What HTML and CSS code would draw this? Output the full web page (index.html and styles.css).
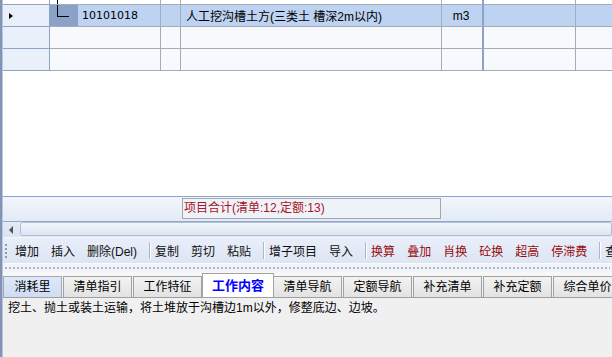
FILE: index.html
```html
<!DOCTYPE html>
<html lang="zh-CN">
<head>
<meta charset="utf-8">
<title>定额</title>
<link rel="stylesheet" href="styles.css">
</head>
<body>
<div class="app">
  <div class="grid">
    <div class="row top">
      <div class="c hdr"></div>
      <div class="c code"><span class="vline"></span></div>
      <div class="c sm"></div>
      <div class="c name"></div>
      <div class="c unit"></div>
      <div class="c x1"></div>
      <div class="c last"></div>
    </div>
    <div class="row sel">
      <div class="c hdr"><span class="arrow"></span></div>
      <div class="c code"><span class="tree"><span class="elbow"></span></span><span class="codetext">10101018</span></div>
      <div class="c sm"></div>
      <div class="c name">人工挖沟槽土方(三类土 槽深2m以内)</div>
      <div class="c unit">m3</div>
      <div class="c x1"></div>
      <div class="c last"></div>
    </div>
    <div class="row">
      <div class="c hdr"></div>
      <div class="c code"></div>
      <div class="c sm"></div>
      <div class="c name"></div>
      <div class="c unit"></div>
      <div class="c x1"></div>
      <div class="c last"></div>
    </div>
    <div class="row">
      <div class="c hdr"></div>
      <div class="c code"></div>
      <div class="c sm"></div>
      <div class="c name"></div>
      <div class="c unit"></div>
      <div class="c x1"></div>
      <div class="c last"></div>
    </div>
  </div>
  <div class="status"><div class="sum">项目合计(清单:12,定额:13)</div></div>
  <div class="hscroll"><span class="larrow"></span><div class="track"></div></div>
  <div class="toolbar">
    <span class="grip"></span>
    <span class="btn">增加</span>
    <span class="btn">插入</span>
    <span class="btn">删除(Del)</span>
    <span class="sep"></span>
    <span class="btn">复制</span>
    <span class="btn">剪切</span>
    <span class="btn">粘贴</span>
    <span class="sep"></span>
    <span class="btn">增子项目</span>
    <span class="btn">导入</span>
    <span class="sep"></span>
    <span class="btn red">换算</span>
    <span class="btn red">叠加</span>
    <span class="btn red">肖换</span>
    <span class="btn red">砼换</span>
    <span class="btn red">超高</span>
    <span class="btn red">停滞费</span>
    <span class="sep"></span>
    <span class="btn">查</span>
  </div>
  <div class="splitter"><span class="dots"></span></div>
  <div class="tabs">
    <span class="tab first">消耗里</span>
    <span class="tab">清单指引</span>
    <span class="tab">工作特征</span>
    <span class="tab active">工作内容</span>
    <span class="tab">清单导航</span>
    <span class="tab">定额导航</span>
    <span class="tab">补充清单</span>
    <span class="tab">补充定额</span>
    <span class="tab">综合单价</span>
  </div>
  <div class="content">挖土、抛土或装土运输，将土堆放于沟槽边1m以外，修整底边、边坡。</div>
</div>
</body>
</html>
```
FILE: styles.css
```css
html, body {
  margin: 0;
  padding: 0;
  background: #ffffff;
}
body {
  width: 612px;
  height: 357px;
  overflow: hidden;
  font-family: "Liberation Sans", "Noto Sans CJK SC", sans-serif;
  font-size: 12px;
  color: #000;
}
.app {
  box-sizing: border-box;
  width: 612px;
  height: 357px;
  display: flex;
  flex-direction: column;
  border-left: 2px solid #8294b5;
  padding-left: 1px;
  background: #b9c6dc;
  overflow: hidden;
}
.grid {
  height: 196px;
  flex: none;
  background: #ffffff;
  display: flex;
  flex-direction: column;
}
.row {
  display: flex;
  height: 22px;
  flex: none;
  background: #f8f9fc;
}
.row.top {
  height: 5px;
  background: #ffffff;
}
.row.sel {
  background: #bdd3f1;
}
.c {
  box-sizing: border-box;
  height: 100%;
  border-right: 1px solid #a3adb8;
  border-bottom: 1px solid #a3adb8;
  display: flex;
  align-items: center;
  white-space: nowrap;
  overflow: hidden;
  flex: none;
}
.hdr {
  width: 47px;
  background: #e9f0fa;
  border-right-color: #8fa4c5;
  border-bottom-color: #8fa4c5;
}
.row.top .hdr {
  background: #ffffff;
}
.code { width: 111px; align-items: stretch; }
.sm { width: 20px; }
.name { width: 261px; padding-left: 5px; }
.unit {
  width: 42px;
  justify-content: center;
  border-right: 2px solid #8ea3c4;
  padding-right: 2px;
}
.x1 { width: 92px; }
.last { flex: 1; border-right: none; }
.vline {
  margin-left: 7px;
  width: 1px;
  background: #000;
}
.tree {
  width: 28px;
  background: #8aa2c8;
  display: flex;
  align-items: flex-start;
  flex: none;
}
.elbow {
  margin-left: 7px;
  width: 11px;
  height: 11px;
  border-left: 1px solid #000;
  border-bottom: 1px solid #000;
}
.codetext {
  padding-left: 4px;
  display: flex;
  align-items: center;
  font-family: "DejaVu Sans", sans-serif;
  font-size: 11px;
}
.arrow {
  margin-left: 6px;
  width: 0;
  height: 0;
  border-left: 4px solid #000;
  border-top: 3.5px solid transparent;
  border-bottom: 3.5px solid transparent;
}
.status {
  flex: none;
  height: 26px;
  box-sizing: border-box;
  border-top: 1px solid #8ea6ca;
  border-bottom: 1px solid #94aacd;
  background: linear-gradient(#f2f6fc, #e2eaf6);
  padding: 1px 0 0 179px;
}
.sum {
  box-sizing: border-box;
  width: 259px;
  height: 21px;
  border: 1px solid #a6a6a6;
  background: #eef3fa;
  color: #a8141c;
  line-height: 19px;
  padding-left: 1px;
  white-space: nowrap;
}
.hscroll {
  flex: none;
  height: 15px;
  display: flex;
  align-items: flex-start;
  background: linear-gradient(#e4ebf6, #d9e3f2);
}
.larrow {
  margin: 4px 0 0 6px;
  width: 0;
  height: 0;
  border-right: 4px solid #4a5566;
  border-top: 4px solid transparent;
  border-bottom: 4px solid transparent;
}
.track {
  margin-left: 7px;
  flex: 1;
  height: 14px;
  box-sizing: border-box;
  border: 1px solid #aebfda;
  border-radius: 3px;
  background: linear-gradient(#f3f6fc, #dce5f2);
}
.toolbar {
  flex: none;
  height: 26px;
  display: flex;
  align-items: center;
  background: linear-gradient(#e9eef9, #dde5f3);
  border-top: 1px solid #f4f7fc;
  box-sizing: border-box;
  white-space: nowrap;
  overflow: hidden;
}
.grip {
  margin: 0 2px 0 2px;
  width: 2px;
  height: 14px;
  flex: none;
  background: repeating-linear-gradient(180deg, #8a9bba 0 2px, transparent 2px 4px);
}
.btn {
  padding: 0 6px;
  flex: none;
  color: #101010;
}
.btn.red { color: #980b0b; }
.sep {
  flex: none;
  width: 1px;
  height: 17px;
  background: #a9b7cf;
  box-shadow: 1px 0 0 #ffffff;
  margin: 0 -1px 0 6px;
}
.splitter {
  flex: none;
  height: 9px;
  background: #f1f4f9;
  border-top: 1px solid #fafbfe;
  box-sizing: border-box;
  display: flex;
  align-items: center;
}
.dots {
  flex: 1;
  height: 2px;
  margin: 0 2px;
  background: repeating-linear-gradient(90deg, #aab4c6 0 2px, transparent 2px 4px);
}
.tabs {
  flex: none;
  height: 25px;
  display: flex;
  align-items: flex-end;
  gap: 1px;
  background: linear-gradient(#f8f8f8, #f0f0f0);
  white-space: nowrap;
  overflow: hidden;
}
.tab {
  flex: none;
  box-sizing: border-box;
  width: 69px;
  height: 21px;
  border: 1px solid #a2a2a2;
  border-bottom: none;
  background: linear-gradient(#f3f3f3, #e2e2e2);
  text-align: center;
  line-height: 21px;
  font-size: 12px;
}
.tab.first {
  width: 59px;
  background: linear-gradient(#dfe8f8, #cfdcf3);
  border-color: #9eaac0;
}
.tab.active {
  width: 72px;
  height: 24px;
  margin: 0 -2px 0 -1px;
  background: #ffffff;
  color: #0000ff;
  font-weight: bold;
  font-size: 13px;
  line-height: 24px;
  position: relative;
  z-index: 1;
}
.content {
  flex: 1;
  background: #f0f0f0;
  border-top: 1px solid #a0a0a0;
  padding: 3px 0 0 5px;
  line-height: 15px;
  white-space: nowrap;
}
```
